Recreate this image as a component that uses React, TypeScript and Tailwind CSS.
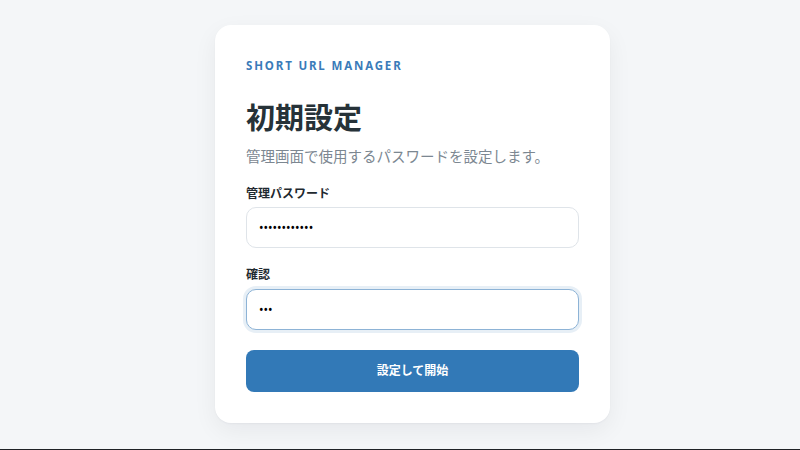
import { useState } from "react";

const fontStack = {
  fontFamily: '"Noto Sans", "Noto Sans CJK JP", sans-serif',
};

export default function App() {
  const [password, setPassword] = useState("abcdefghijkl");
  const [confirm, setConfirm] = useState("abc");

  return (
    <div
      className="flex h-[450px] w-full flex-col border-b border-[#1f2226] bg-[#f4f6f8]"
      style={fontStack}
    >
      <div className="pl-[215px] pt-[25px]">
        <form
          className="flex w-[395px] flex-col rounded-2xl bg-white px-[31px] pb-[31px] pt-[32px] shadow-[0_8px_24px_rgba(15,23,42,0.06),0_1px_2px_rgba(15,23,42,0.04)]"
          onSubmit={(e) => e.preventDefault()}
        >
          <p className="text-[11.5px] font-bold uppercase leading-[18px] tracking-[0.16em] text-[#3a7bb9]">
            Short URL Manager
          </p>

          <h1 className="mt-[23px] text-[29px] font-bold leading-[40px] text-[#263238]">
            初期設定
          </h1>
          <p className="mt-[7px] text-[14.5px] leading-[22px] text-[#7c8791]">
            管理画面で使用するパスワードを設定します。
          </p>

          <label className="mt-[19px] block text-xs font-bold leading-4 text-[#1f2a30]">
            管理パスワード
          </label>
          <input
            type="password"
            value={password}
            onChange={(e) => setPassword(e.target.value)}
            className="mt-[5px] h-[41px] w-full rounded-[10px] border border-[#dfe4e9] bg-white px-3 text-xs text-black outline-none"
          />

          <label className="mt-[19px] block text-xs font-bold leading-4 text-[#1f2a30]">
            確認
          </label>
          <input
            type="password"
            autoFocus
            value={confirm}
            onChange={(e) => setConfirm(e.target.value)}
            className="mt-[6px] h-[41px] w-full rounded-[10px] border border-[#8db3d6] bg-white px-3 text-xs text-black shadow-[0_0_0_3px_rgba(58,123,185,0.12)] outline-none"
          />

          <button
            type="submit"
            className="mt-[20px] h-[42px] w-full rounded-lg bg-[#3279b7] text-xs font-bold text-white"
          >
            設定して開始
          </button>
        </form>
      </div>
    </div>
  );
}
